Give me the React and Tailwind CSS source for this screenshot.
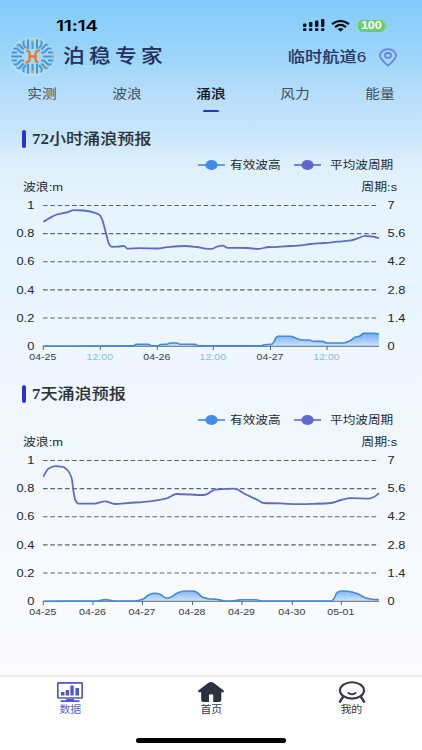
import React from "react";

const FONT = "font-['Liberation_Sans','Noto_Sans_CJK_SC',sans-serif]";

/* Monotone cubic path through a list of [x, y] points */
function smooth(pts) {
  const n = pts.length;
  const d = [];
  for (let i = 0; i < n - 1; i++) d.push((pts[i + 1][1] - pts[i][1]) / (pts[i + 1][0] - pts[i][0]));
  const m = pts.map((_, i) => {
    if (i === 0) return d[0];
    if (i === n - 1) return d[n - 2];
    if (d[i - 1] * d[i] <= 0) return 0;
    return (2 * d[i - 1] * d[i]) / (d[i - 1] + d[i]);
  });
  let p = `M${pts[0][0]} ${pts[0][1]}`;
  for (let i = 0; i < n - 1; i++) {
    const h = (pts[i + 1][0] - pts[i][0]) / 3;
    p += `C${pts[i][0] + h} ${pts[i][1] + m[i] * h} ${pts[i + 1][0] - h} ${pts[i + 1][1] - m[i + 1] * h} ${pts[i + 1][0]} ${pts[i + 1][1]}`;
  }
  return p;
}

/* Chart coordinates: the top grid line lies at y = 5.5 */
const period72 = [[43.3,21.7],[57.3,14.3],[66.7,12.5],[74,10.2],[83.3,10.5],[93.3,12.3],[99,14.5],[101.7,18.3],[106,33.3],[109.3,44.6],[111.7,46.8],[118,46.7],[124,45.8],[127.3,48.6],[140,48.2],[157,48.5],[167,47.2],[185,46],[197,47],[208,48.9],[212,48.9],[217.7,46.3],[222.7,45.7],[227.7,47.9],[247.7,48],[257.7,49],[269.3,47],[276,47.2],[284,46.3],[297.7,45.7],[311,44],[324.3,43],[337.7,41.7],[349.3,40.7],[357.7,38.3],[365,35.8],[372.7,36.7],[378.9,38.2]];
const height72 = [[43.3,146],[133.5,145.9],[136,144.4],[148.3,144.4],[152,145.8],[157.3,145.8],[160.7,144.5],[167,144.3],[170,143],[177,143],[180,144.2],[195,144.4],[199,145.9],[261,145.9],[264.3,144.7],[271.7,144.3],[277.7,136.3],[290.3,136.3],[301.7,140],[309.3,140],[312.7,141.3],[322.7,141.4],[326.7,143],[342.7,143],[350,140.7],[355,137.3],[360,136],[363.3,133.2],[374.3,133.2],[378.9,134]];
const period7 = [[43.3,21.7],[48.3,13.7],[55,11.1],[62.7,11.8],[68.3,16],[71.7,23.3],[73.3,35],[75.3,45],[78.3,48.6],[95,48.6],[105,46.3],[115,49],[128.3,48],[150,46.3],[166.7,43.3],[176.7,39],[203.3,40],[208,38.6],[212,35.8],[216,34.6],[234.3,33.7],[244.3,38.7],[257.7,45],[263.7,48],[281,48.4],[297.7,49.2],[314,48.8],[331,48],[341,45],[351,43.1],[369.3,43.6],[374,42],[378.9,38.3]];
const height7 = [[43.3,146.2],[97,146.1],[105,144.6],[115,146],[135,146],[143.3,144],[149.3,139.6],[155,138.3],[160,139.3],[165,142.7],[168,143],[171.7,141.7],[176.7,138.3],[183.3,136.3],[193.3,136],[197.3,137.7],[202.7,142.3],[210,144],[216,144.3],[226,146],[236,145.5],[241,144.7],[256,144.8],[262.7,146],[331,146],[333.7,144],[337,137.7],[341,136],[347.7,136.3],[357.7,138.7],[365,142.7],[372.7,144.3],[378.9,144.8]];

const ticks72 = [[43.3,"04-25"],[100.3,"12:00"],[157.3,"04-26"],[213.3,"12:00"],[270.5,"04-27"],[327,"12:00"]];
const ticks7 = [[43.3,"04-25"],[93,"04-26"],[142.5,"04-27"],[192.5,"04-28"],[242,"04-29"],[292.3,"04-30"],[341.3,"05-01"]];
const leftAxis = ["1", "0.8", "0.6", "0.4", "0.2", "0"];
const rightAxis = ["7", "5.6", "4.2", "2.8", "1.4", "0"];

function Chart({ id, period, height, ticks, className }) {
  const area = `${smooth(height)}L378.9 146.2L43.3 146.2Z`;
  return (
    <svg className={`block w-[422px] h-[170px] ${className}`} viewBox="0 0 422 170">
      <defs>
        <linearGradient id={id} gradientUnits="userSpaceOnUse" x1="0" y1="132" x2="0" y2="146">
          <stop offset="0" stopColor="#64a6f2" />
          <stop offset="1" stopColor="#cde3fb" />
        </linearGradient>
      </defs>
      {leftAxis.map((t, i) => {
        const y = 5.5 + i * 28.12;
        return (
          <g key={t}>
            {i < 5 && <line x1="43" x2="379" y1={y} y2={y} stroke="#59646b" strokeWidth="1.1" strokeDasharray="4.6 2.7" />}
            <text transform={`translate(34.3 ${y + 3.7}) scale(1.2 1)`} textAnchor="end" fontSize="10.7" fill="#20262b">{t}</text>
            <text transform={`translate(387.5 ${y + 3.7}) scale(1.2 1)`} fontSize="10.7" fill="#20262b">{rightAxis[i]}</text>
          </g>
        );
      })}
      <path d={area} fill={`url(#${id})`} />
      <line x1="43" x2="379" y1="146.3" y2="146.3" stroke="#626d7a" strokeWidth="1" />
      {ticks.map(([x, t], i) => (
        <g key={i}>
          <line x1={x} x2={x} y1="146" y2="150" stroke="#59636e" strokeWidth="1" />
          <text transform={`translate(${x - 0.5} 160.2) scale(1.2 1)`} textAnchor="middle" fontSize="8.8" fill={t === "12:00" ? "#83bfdc" : "#353c42"}>{t}</text>
        </g>
      ))}
      <path d={smooth(height)} fill="none" stroke="#4488d8" strokeWidth="1.6" strokeLinejoin="round" />
      <path d={smooth(period)} fill="none" stroke="#5e6cc4" strokeWidth="1.8" strokeLinejoin="round" />
    </svg>
  );
}

function Marker({ color }) {
  return (
    <svg className="block w-[27px] h-[12px] shrink-0" viewBox="0 0 27 12">
      <path d="M0 6H27" stroke={color} strokeWidth="1.6" />
      <ellipse cx="13.5" cy="6" rx="6.2" ry="5.1" fill={color} />
    </svg>
  );
}

function Forecast({ number, title, ...chart }) {
  return (
    <section className="h-[255px] flex flex-col">
      <h2 className="h-[28px] pt-[5px] pl-[21.5px] flex items-start text-[#2c3338]">
        <i className="w-[4.5px] h-[18px] rounded-[2px] bg-[#2b34d3] shrink-0" />
        <span className="ml-[6px] mt-px inline-block origin-left scale-x-[1.17] whitespace-nowrap text-[14.6px] leading-[16px] font-medium">
          <span className="font-['Liberation_Serif',serif] font-bold text-[14.5px]">{number}</span>
          <span className="[-webkit-text-stroke:0.1px_#2c3338]">{title}</span>
        </span>
      </h2>
      <div className="h-[24px] pl-[198px] flex items-center text-[11.2px] text-[#242a2f] whitespace-nowrap">
        <Marker color="#438bea" />
        <span className="w-[68.5px] pl-[5px]"><span className="inline-block origin-left scale-x-[1.13]">有效波高</span></span>
        <Marker color="#5e68d2" />
        <span className="pl-[9.5px]"><span className="inline-block origin-left scale-x-[1.13]">平均波周期</span></span>
      </div>
      <div className="h-[22px] pb-[2px] pl-[23px] pr-[25px] flex items-center justify-between text-[11.2px] text-[#242a2f] whitespace-nowrap">
        <span className="inline-block origin-left scale-x-[1.15]">波浪:m</span>
        <span className="inline-block origin-right scale-x-[1.15]">周期:s</span>
      </div>
      <Chart {...chart} className="mt-[1px]" />
    </section>
  );
}

function Logo() {
  return (
    <svg className="block w-[48px] h-[42px]" viewBox="0 0 48 42">
      <defs>
        <radialGradient id="halo">
          <stop offset="0.8" stopColor="#c2e6fd" />
          <stop offset="1" stopColor="#a8dbfc" stopOpacity="0" />
        </radialGradient>
        <clipPath id="disc"><ellipse cx="24.5" cy="20.5" rx="21.5" ry="17.5" /></clipPath>
      </defs>
      <ellipse cx="24" cy="21" rx="24" ry="21" fill="url(#halo)" />
      <g clipPath="url(#disc)">
        <rect width="48" height="42" fill="#a9d6f2" />
        <g fill="none" stroke="#4398da" strokeWidth="2">
          <path d="M24.5 6V13M24.5 28V35M2 20.5H14M35 20.5H47" />
          <path d="M20 2V13M29 2V13M20 39V28M29 39V28" />
          <path d="M15.5 3V9L18 12M33.5 3V9L31 12M15.5 38V32L18 29M33.5 38V32L31 29" />
          <path d="M8 8.5H11L15.5 13.5M41 8.5H38L33.5 13.5M8 32.5H11L15.5 27.5M41 32.5H38L33.5 27.5" />
          <path d="M2 12.5H9L13 16.5H16M47 12.5H40L36 16.5H33M2 28.5H9L13 24.5H16M47 28.5H40L36 24.5H33" />
          <path d="M2 16.5H9M40 16.5H47M2 24.5H9M40 24.5H47" />
        </g>
        <g fill="#dda65b">
          <circle cx="24.5" cy="5.2" r="1.3" /><circle cx="24.5" cy="36" r="1.4" />
          <circle cx="10" cy="10.5" r="1.2" /><circle cx="38" cy="31" r="1.2" /><circle cx="44.5" cy="20" r="1.2" />
        </g>
      </g>
      <path d="M18.5 14.7Q21.8 14.6 21.6 18V23Q21.5 26.5 17.5 26.6M32 14.3Q27.6 14.8 27.6 18V23.5Q27.7 26.4 30.5 26.4M21.6 20.5H27.6" fill="none" stroke="#d98040" strokeWidth="2.4" />
    </svg>
  );
}

const tabs = ["实测", "波浪", "涌浪", "风力", "能量"];

export default function App() {
  return (
    <div className={`${FONT} w-[422px] h-[750px] overflow-hidden flex flex-col bg-[linear-gradient(180deg,#82cafa_0px,#99d4fb_50px,#badffb_100px,#c5e5fc_130px,#def0fc_165px,#e5f4fe_205px,#e9f5fe_300px,#eff6fe_360px,#f1f7fd_460px,#f6f9fd_550px,#fbfbfe_675px)]`}>
      <div className="h-[36px] pt-[17px] pl-[56px] pr-[35px] flex items-start justify-between">
        <span className="inline-block origin-left scale-x-[1.32] font-['Inter',sans-serif] font-semibold text-[14.5px] leading-[18px] tracking-[-0.2px] text-black">11:14</span>
        <div className="flex items-center h-[17px]">
          <svg className="block w-[22px] h-[13px]" viewBox="0 0 22 13">
            <g fill="#071018">
              <rect x="0" y="4.5" width="3.4" height="3.5" rx="1" /><rect x="6" y="3" width="3.4" height="5" rx="1" />
              <rect x="12" y="1.5" width="3.4" height="6.5" rx="1" /><rect x="18" y="0" width="3.4" height="8" rx="1" />
              <rect x="0" y="9.3" width="3.4" height="2.7" rx="1" /><rect x="6" y="9.3" width="3.4" height="2.7" rx="1" />
              <rect x="12" y="9.3" width="3.4" height="2.7" rx="1" /><rect x="18" y="9.3" width="3.4" height="2.7" rx="1" />
            </g>
          </svg>
          <svg className="ml-[6px] block w-[19px] h-[12px]" viewBox="0 0 19 12">
            <g fill="none" stroke="#071018" strokeWidth="2.1">
              <path d="M1 4.2Q9.5 -2.2 18 4.2" /><path d="M4 7.1Q9.5 2.8 15 7.1" />
            </g>
            <path d="M6.5 9Q9.5 6.8 12.5 9L9.5 11.7Z" fill="#071018" />
          </svg>
          <span className="ml-[8px] w-[27px] h-[12px] rounded-[4.5px] bg-[#6bcb70] text-white flex items-center justify-center text-[10px] font-bold">
            <span className="inline-block scale-x-[1.25]">100</span>
          </span>
          <i className="ml-px w-[1.5px] h-[4px] rounded-r-full bg-[#72c99b]" />
        </div>
      </div>

      <header className="h-[42px] pl-[8px] pr-[25px] flex items-center">
        <Logo />
        <h1 className="ml-[6.5px] inline-block origin-left scale-x-[1.14] text-[19px] leading-[24px] font-medium tracking-[3.8px] text-[#27305c] whitespace-nowrap [-webkit-text-stroke:0.1px_#27305c]">泊稳专家</h1>
        <div className="ml-auto flex items-center">
          <span className="inline-block origin-right scale-x-[1.15] text-[15px] font-medium text-[#2b3868] whitespace-nowrap [-webkit-text-stroke:0.1px_#2b3868]">临时航道6</span>
          <svg className="ml-[12.5px] block w-[18px] h-[19px]" viewBox="0 0 18 19" fill="none" stroke="#6d83e0" strokeWidth="1.8">
            <path d="M9 17.6C5.2 14.6 1 11.4 1 7.6C1 3.8 4.5 1.1 9 1.1S17 3.8 17 7.6C17 11.4 12.8 14.6 9 17.6Z" />
            <ellipse cx="9" cy="7.4" rx="3" ry="2.4" />
          </svg>
        </div>
      </header>

      <nav className="h-[47px] flex">
        {tabs.map((t, i) => (
          <div key={t} className={i === 2 ? "flex-1 flex flex-col items-center font-medium text-[#111a22] [-webkit-text-stroke:0.1px_#111a22]" : "flex-1 flex flex-col items-center text-[#3f4f5b]"}>
            <span className="mt-[6px] inline-block scale-x-[1.13] text-[13px] leading-[20px]">{t}</span>
            {i === 2 && <i className="mt-[5.5px] w-[16px] h-[2.6px] rounded-full bg-[#2b31d2]" />}
          </div>
        ))}
      </nav>

      <main className="h-[550px] shrink-0">
        <Forecast number="72" title="小时涌浪预报" id="area72" period={period72} height={height72} ticks={ticks72} />
        <Forecast number="7" title="天涌浪预报" id="area7" period={period7} height={height7} ticks={ticks7} />
      </main>

      <footer className="h-[75px] shrink-0 bg-white border-t-2 border-[#ebedec] flex flex-col items-center">
        <div className="w-full h-[61px] pt-[4px] flex text-[10.3px] leading-[14px] text-[#34383d]">
          <div className="flex-1 flex flex-col items-center text-[#6564be]">
            <svg className="block w-[28px] h-[22px]" viewBox="0 0 28 22">
              <rect x="1.8" y="1.8" width="24.4" height="15.2" rx="0.8" fill="none" stroke="#5055ca" strokeWidth="1.7" />
              <path d="M5 11h3.5v3.5H5zM9.7 9h3.5v5.5H9.7zM14.4 4.5h3.3v10h-3.3zM19.4 7H23v7.5h-3.6zM10 18h8v1.3h5.5V21h-19v-1.7H10z" fill="#5055ca" />
            </svg>
            <span className="inline-block scale-x-[1.06]">数据</span>
          </div>
          <div className="flex-1 flex flex-col items-center">
            <svg className="block w-[28px] h-[22px]" viewBox="0 0 28 22">
              <path d="M11.8 1.5Q14 .3 16.2 1.5L26.4 9.2Q27.2 10 26.8 11.2H24.3V19.2Q24.3 21 22.3 21H16.2V13.5H12V21H6.2Q4.2 21 4.2 19.2V11.2H1.3Q.8 10 1.6 9.2Z" fill="#2b3142" />
            </svg>
            <span className="inline-block scale-x-[1.06]">首页</span>
          </div>
          <div className="flex-1 flex flex-col items-center">
            <svg className="block w-[28px] h-[22px]" viewBox="0 0 28 22" fill="none" stroke="#373750" strokeWidth="2.1">
              <ellipse cx="14" cy="9.4" rx="12" ry="8.2" />
              <path d="M10.5 12Q14 14.4 17.5 12" strokeLinecap="round" />
              <path d="M5 15.8L2 20.6M23 15.8L26 20.6" strokeWidth="2.5" strokeLinecap="round" />
            </svg>
            <span className="inline-block scale-x-[1.06]">我的</span>
          </div>
        </div>
        <i className="w-[150px] h-[4.5px] rounded-full bg-black shrink-0" />
      </footer>
    </div>
  );
}
